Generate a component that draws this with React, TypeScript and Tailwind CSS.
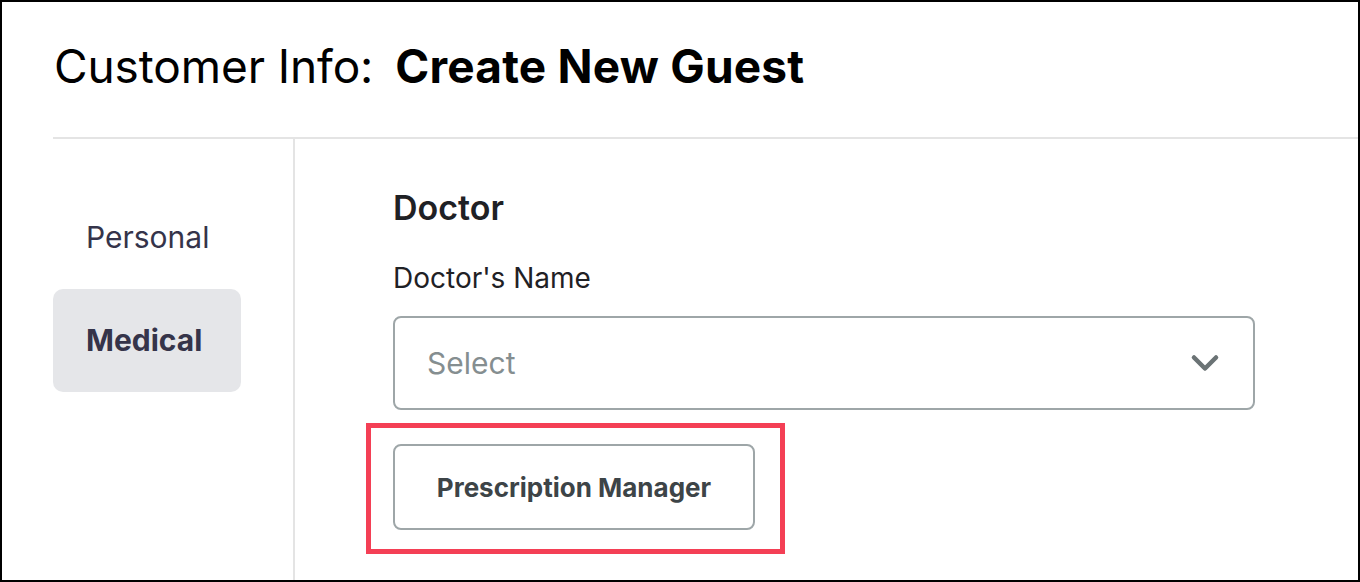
import { ChevronDown } from "lucide-react";

export default function App() {
  return (
    <div className="w-[1360px] h-[582px] border-2 border-black bg-white overflow-hidden font-['Inter',sans-serif] flex flex-col">
      <div className="h-[135px] shrink-0 pl-[52px] pt-[37px]">
        <h1 className="text-[46px] leading-[54px] text-black tracking-[-0.1px]">
          Customer Info:<span className="ml-[22px] font-bold tracking-[0.2px]">Create New Guest</span>
        </h1>
      </div>

      <div className="ml-[51px] flex flex-1 border-t-2 border-[#e4e4e4]">
        <nav className="w-[242px] shrink-0 border-r-2 border-[#e4e4e4] pt-[47px] text-[#35344a]">
          <div className="w-[188px] h-[103px] rounded-[10px] pl-[33px] flex items-center text-[30px]">
            Personal
          </div>
          <div className="w-[188px] h-[103px] rounded-[10px] pl-[33px] flex items-center text-[30px] font-bold bg-[#e5e6e9]">
            Medical
          </div>
        </nav>

        <main className="flex-1 pl-[98px] pt-[49px]">
          <h2 className="text-[34px] leading-[40px] font-semibold text-[#1f2125]">Doctor</h2>
          <label className="block mt-[33px] text-[28px] leading-[34px] text-[#1f2125]">Doctor's Name</label>
          <div className="mt-[21px] w-[862px] h-[94px] border-2 border-[#9ea6a8] rounded-[8px] flex items-center justify-between pl-[32px] pr-[26px]">
            <span className="text-[30px] text-[#858e90]">Select</span>
            <ChevronDown className="w-[44px] h-[44px] text-[#6b7375]" strokeWidth={2.5} />
          </div>
          <div className="relative mt-[34px] w-[362px]">
            <button className="w-[362px] h-[86px] border-2 border-[#9ea6a8] rounded-[8px] bg-white text-[26px] font-bold text-[#3d4447]">
              Prescription Manager
            </button>
            <div className="absolute left-[-27px] top-[-21px] right-[-30px] bottom-[-24px] border-[5px] border-[#f43f55] pointer-events-none" />
          </div>
        </main>
      </div>
    </div>
  );
}
